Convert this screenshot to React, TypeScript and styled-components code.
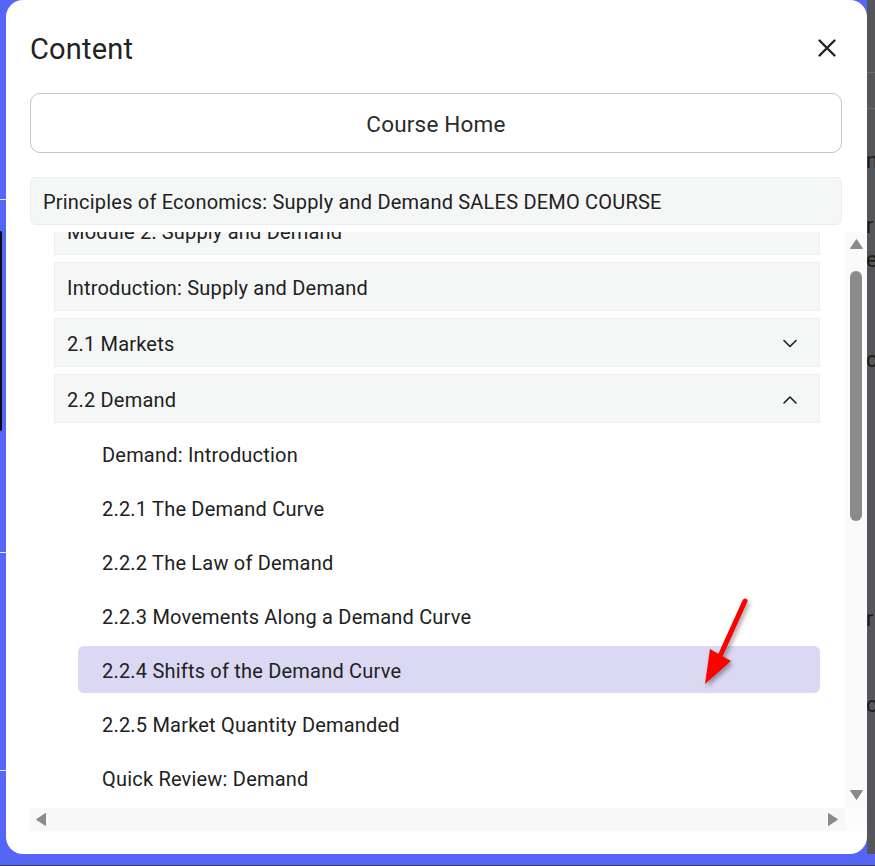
import React from 'react';
import styled, { createGlobalStyle } from 'styled-components';

const GlobalStyle = createGlobalStyle`
    html, body {
        margin: 0;
        padding: 0;
    }
    body {
        font-family: Roboto, 'Liberation Sans', sans-serif;
        color: #212121;
        background: #5566f6;
    }
`;

const Page = styled.div`
    width: 875px;
    height: 866px;
    display: flex;
    flex-direction: column;
    overflow: hidden;
`;

const Stage = styled.div`
    height: 854px;
    display: flex;
    flex-direction: row;
`;

const LeftRail = styled.div`
    width: 6px;
    display: flex;
    flex-direction: column;
    background: #5566f6;
`;

const RailLine = styled.div<{ $top: number }>`
    margin-top: ${(p) => p.$top}px;
    height: 1px;
    background: rgba(255, 255, 255, 0.85);
`;

const RailBar = styled.div<{ $top: number; $height: number }>`
    margin-top: ${(p) => p.$top}px;
    height: ${(p) => p.$height}px;
    width: 2px;
    background: #0b0b12;
    border-radius: 0 2px 2px 0;
`;

const RightRail = styled.div`
    flex: 1;
    display: flex;
    flex-direction: column;
    background: #55565a;
    overflow: hidden;
    font-size: 22px;
    color: #1c1c1e;
`;

const Backdrop = styled.span<{ $top: number }>`
    margin-top: ${(p) => p.$top}px;
    margin-left: -1px;
    line-height: 22px;
    height: 22px;
`;

const BackdropRule = styled.div<{ $top: number }>`
    margin-top: ${(p) => p.$top}px;
    height: 1px;
    background: #6a6b70;
`;

const BottomBar = styled.div`
    height: 12px;
    background: #5566f6;
    border-bottom: 1px solid #3b3c44;
    box-sizing: border-box;
`;

const Modal = styled.div`
    position: relative;
    width: 861px;
    height: 854px;
    background: #ffffff;
    border-radius: 17px;
    display: flex;
    flex-direction: column;
    box-sizing: border-box;
    padding: 28px 0 0 24px;
    letter-spacing: 0.2px;
`;

const Header = styled.div`
    display: flex;
    flex-direction: row;
    align-items: center;
    justify-content: space-between;
    padding: 0 28px 0 0;
    height: 40px;
`;

const Title = styled.h2`
    margin: 2px 0 0;
    font-size: 29px;
    font-weight: 400;
    color: #222;
`;

const CloseButton = styled.button`
    width: 24px;
    height: 24px;
    padding: 0;
    border: 0;
    background: transparent;
    display: flex;
    align-items: center;
    justify-content: center;
`;

const HomeButton = styled.button`
    margin: 25px 25px 0 0;
    height: 60px;
    padding-top: 3px;
    border: 1px solid #c4c4c4;
    border-radius: 10px;
    background: #fff;
    font-family: inherit;
    font-size: 22.5px;
    letter-spacing: 0.2px;
    color: #2b2b2b;
`;

const CourseHeader = styled.div`
    margin: 24px 25px 0 0;
    height: 48px;
    box-sizing: border-box;
    display: flex;
    align-items: center;
    padding: 2px 12px 0;
    background: #f5f7f6;
    border: 1px solid #eceeed;
    border-radius: 6px;
    font-size: 20px;
`;

const ScrollFrame = styled.div`
    margin-top: 7px;
    display: grid;
    grid-template-columns: 1fr 22px;
    grid-template-rows: 576px 23px;
`;

const Viewport = styled.div`
    overflow: hidden;
`;

const List = styled.div<{ $offset: number }>`
    margin-top: ${(p) => -p.$offset}px;
    padding: 0 25px 0 24px;
    display: flex;
    flex-direction: column;
    row-gap: 7px;
`;

const Section = styled.div`
    height: 49px;
    box-sizing: border-box;
    display: flex;
    align-items: center;
    justify-content: space-between;
    padding: 2px 22px 0 12px;
    background: #f5f7f6;
    border: 1px solid #eceeed;
    font-size: 20px;
`;

const Lesson = styled.div<{ $active?: boolean }>`
    margin-left: 24px;
    height: 47px;
    box-sizing: border-box;
    display: flex;
    align-items: center;
    padding: 2px 24px 0;
    border-radius: 6px;
    background: ${(p) => (p.$active ? '#dbd8f3' : 'transparent')};
    font-size: 20px;
`;

const VTrack = styled.div`
    background: #fafafa;
    display: flex;
    flex-direction: column;
    align-items: center;
    padding: 7px 0 8px;
    box-sizing: border-box;
`;

const Thumb = styled.div`
    margin-top: 22px;
    width: 12px;
    height: 250px;
    border-radius: 6px;
    background: #8b8b8b;
`;

const Spacer = styled.div`
    flex: 1;
`;

const HTrack = styled.div`
    background: #f8f8f8;
    display: flex;
    align-items: center;
    justify-content: space-between;
    padding: 0 7px 0 6px;
`;

const Corner = styled.div`
    background: #fcfcfc;
`;

const Pointer = styled.svg`
    position: absolute;
    left: 694px;
    top: 594px;
    overflow: visible;
    filter: drop-shadow(2px 3px 2px rgba(0, 0, 0, 0.35));
`;

const Triangle = ({ dir }: { dir: 'up' | 'down' | 'left' | 'right' }) => {
    const horizontal = dir === 'left' || dir === 'right';
    const w = horizontal ? 10 : 13;
    const h = horizontal ? 13 : 10;
    const points = {
        up: '6.5,0.5 12.5,9.5 0.5,9.5',
        down: '0.5,0.5 12.5,0.5 6.5,9.5',
        left: '9.5,0.5 9.5,12.5 0.5,6.5',
        right: '0.5,0.5 9.5,6.5 0.5,12.5',
    }[dir];
    return (
        <svg width={w} height={h} viewBox={`0 0 ${w} ${h}`}>
            <polygon points={points} fill='#8a8a8a' stroke='#8a8a8a' strokeLinejoin='round' />
        </svg>
    );
};

const Chevron = ({ open }: { open?: boolean }) => (
    <svg width='14' height='9' viewBox='0 0 14 9' fill='none'>
        <path
            d={open ? 'M1 8 L7 2 L13 8' : 'M1 1.5 L7 7.5 L13 1.5'}
            stroke='#1f1f1f'
            strokeWidth='1.6'
            strokeLinecap='round'
            strokeLinejoin='round'
        />
    </svg>
);

const sections = [
    { title: 'Module 2: Supply and Demand' },
    { title: 'Introduction: Supply and Demand' },
    { title: '2.1 Markets', toggle: 'closed' },
    { title: '2.2 Demand', toggle: 'open' },
];

const lessons = [
    'Demand: Introduction',
    '2.2.1 The Demand Curve',
    '2.2.2 The Law of Demand',
    '2.2.3 Movements Along a Demand Curve',
    '2.2.4 Shifts of the Demand Curve',
    '2.2.5 Market Quantity Demanded',
    'Quick Review: Demand',
];

export default function App() {
    return (
        <>
            <GlobalStyle />
            <Page>
                <Stage>
                    <LeftRail>
                        <RailLine $top={199} />
                        <RailBar $top={31} $height={200} />
                        <RailLine $top={121} />
                        <RailLine $top={217} />
                    </LeftRail>
                    <Modal>
                        <Header>
                            <Title>Content</Title>
                            <CloseButton aria-label='Close'>
                                <svg width='20' height='20' viewBox='0 0 20 20'>
                                    <path
                                        d='M2.5 2.5 L17.5 17.5 M17.5 2.5 L2.5 17.5'
                                        stroke='#222'
                                        strokeWidth='2.4'
                                        strokeLinecap='round'
                                    />
                                </svg>
                            </CloseButton>
                        </Header>
                        <HomeButton>Course Home</HomeButton>
                        <CourseHeader>
                            Principles of Economics: Supply and Demand SALES DEMO COURSE
                        </CourseHeader>
                        <ScrollFrame>
                            <Viewport>
                                <List $offset={26}>
                                    {sections.map((s) => (
                                        <Section key={s.title}>
                                            <span>{s.title}</span>
                                            {s.toggle && <Chevron open={s.toggle === 'open'} />}
                                        </Section>
                                    ))}
                                    {lessons.map((l) => (
                                        <Lesson key={l} $active={l.startsWith('2.2.4')}>
                                            {l}
                                        </Lesson>
                                    ))}
                                </List>
                            </Viewport>
                            <VTrack>
                                <Triangle dir='up' />
                                <Thumb />
                                <Spacer />
                                <Triangle dir='down' />
                            </VTrack>
                            <HTrack>
                                <Triangle dir='left' />
                                <Triangle dir='right' />
                            </HTrack>
                            <Corner />
                        </ScrollFrame>
                        <Pointer width='50' height='95' viewBox='0 0 50 95'>
                            <line x1='45' y1='7' x2='21' y2='60' stroke='#ff0000' strokeWidth='5' strokeLinecap='round' />
                            <polygon points='5,90 31,67 10,55' fill='#ff0000' />
                        </Pointer>
                    </Modal>
                    <RightRail>
                        <BackdropRule $top={72} />
                        <BackdropRule $top={35} />
                        <Backdrop $top={41}>n</Backdrop>
                        <Backdrop $top={43}>r</Backdrop>
                        <Backdrop $top={12}>e</Backdrop>
                        <Backdrop $top={78}>c</Backdrop>
                        <Backdrop $top={237}>r</Backdrop>
                        <Backdrop $top={64}>c</Backdrop>
                    </RightRail>
                </Stage>
                <BottomBar />
            </Page>
        </>
    );
}
